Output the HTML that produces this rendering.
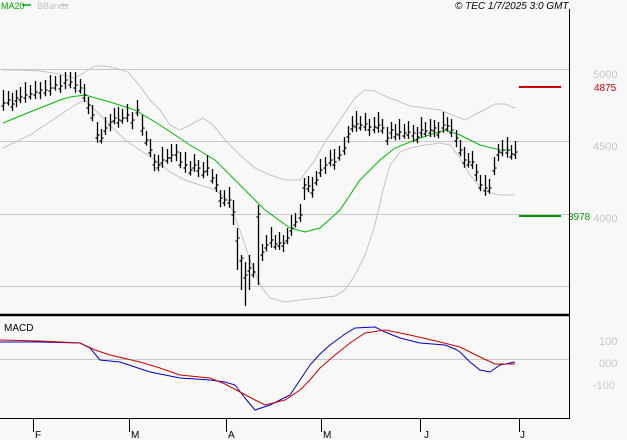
<!DOCTYPE html><html><head><style>html,body{margin:0;padding:0;background:#f8f8f8}svg{display:block}text{font-family:"Liberation Sans",sans-serif}</style></head><body>
<svg id="s" width="627" height="440" xmlns="http://www.w3.org/2000/svg">
<rect width="627" height="440" fill="#f8f8f8"/>
<g stroke="#c8c8c8" stroke-width="1">
<line x1="0" y1="69.5" x2="569" y2="69.5"/><line x1="0" y1="141.5" x2="569" y2="141.5"/><line x1="0" y1="214.5" x2="569" y2="214.5"/><line x1="0" y1="286.5" x2="569" y2="286.5"/><line x1="0" y1="359.5" x2="569" y2="359.5"/>
</g>
<g fill="none" stroke="#c4c4c4" stroke-width="1">
<polyline points="3,70 20,70 40,71 60,74 75,78 85,72 95,66 105,66 115,68 128,72 140,86 150,100 160,110 170,125 180,130 190,125 203,118 213,125 225,140 240,155 255,168 270,175 285,180 300,180 315,160 325,142 340,120 355,98 365,90 375,91 385,96 395,100 410,106 425,108 440,110 455,116 465,120 480,112 495,104 505,104 515,108"/>
<polyline points="3,148 30,135 60,115 75,105 85,100 95,110 110,125 125,140 140,150 155,160 170,172 185,180 200,185 215,190 228,200 240,230 250,260 260,285 270,298 285,302 300,300 320,298 335,296 345,290 355,275 365,255 375,225 383,190 390,165 400,152 410,148 425,145 440,143 450,145 460,158 470,175 480,187 490,193 500,195 515,195"/>
</g>
<polyline fill="none" stroke="#00bb00" points="3,123 30,112 60,100 70,97 85,95 110,102 135,110 160,125 190,145 215,160 240,185 265,210 290,228 305,232 320,228 340,210 360,180 380,160 395,148 420,138 445,130 460,135 480,145 500,150 512,150"/>
<g id="bars" stroke="#000" stroke-width="1.3" fill="none"></g>
<line x1="519" y1="87" x2="561" y2="87" stroke="#cc0000" stroke-width="2"/>
<line x1="519" y1="216" x2="561" y2="216" stroke="#009900" stroke-width="2"/>
<text x="594" y="91" font-size="10" fill="#cc0000">4875</text>
<text x="568" y="220" font-size="10" fill="#009900">3978</text>
<g font-size="11" fill="#c8c8c8"><text x="593" y="78">5000</text><text x="593" y="150">4500</text><text x="593" y="222">4000</text>
<text x="599" y="345">100</text><text x="599" y="367">000</text><text x="593" y="389">-100</text></g>
<polyline fill="none" stroke="#0000cc" points="0,342 40,342 80,343 90,348 100,360 120,362 135,367 150,372 180,378 210,380 225,382 235,385 245,398 255,410 270,405 280,400 290,395 300,380 310,365 320,354 330,345 345,334 355,328 375,327 385,332 400,338 420,343 445,345 455,349 460,352 470,362 480,370 490,372 500,365 515,362"/>
<polyline fill="none" stroke="#cc0000" points="0,340 40,341 80,343 95,350 110,355 140,362 160,368 180,375 210,378 225,384 240,392 255,400 265,405 285,400 300,390 310,380 320,368 335,355 350,343 365,333 385,330 410,335 440,342 460,347 480,357 495,364 515,364"/>
<line x1="569.5" y1="9" x2="569.5" y2="419" stroke="#000"/>
<line x1="0" y1="315" x2="570" y2="315" stroke="#000" stroke-width="2.5"/>
<line x1="0" y1="418.5" x2="570" y2="418.5" stroke="#000"/>
<g stroke="#000"><line x1="33.5" y1="418" x2="33.5" y2="432"/><line x1="129.5" y1="418" x2="129.5" y2="432"/><line x1="226.5" y1="418" x2="226.5" y2="432"/><line x1="321.5" y1="418" x2="321.5" y2="432"/><line x1="420.5" y1="418" x2="420.5" y2="432"/><line x1="519.5" y1="418" x2="519.5" y2="432"/></g>
<g font-size="10" fill="#000"><text x="35" y="438">F</text><text x="131" y="438">M</text><text x="228" y="438">A</text><text x="323" y="438">M</text><text x="424" y="438">J</text><text x="520" y="438">J</text></g>
<text x="1" y="9" font-size="9" fill="#00aa00">MA20</text><line x1="22" y1="5" x2="31" y2="5" stroke="#00aa00" stroke-width="1.5"/>
<text x="37" y="9" font-size="9" fill="#c4c4c4">BBands</text><line x1="60" y1="5" x2="68" y2="5" stroke="#c4c4c4" stroke-width="1.5"/>
<text x="455" y="9" font-size="10" font-style="italic" fill="#000">© TEC 1/7/2025 3:0 GMT</text>
<text x="4" y="331" font-size="10" fill="#000">MACD</text>
</svg>
<script>
var c=[[3,103],[8,100],[12,104],[16,98],[20,97],[25,95],[30,94],[35,92],[40,90],[45,90],[50,88],[55,85],[60,86],[65,80],[70,82],[75,85],[80,88],[84,95],[88,105],[92,115],[97,135],[101,138],[105,128],[110,122],[114,118],[118,120],[122,118],[127,115],[132,120],[137,110],[142,128],[146,140],[150,150],[154,162],[158,165],[162,160],[167,158],[171,155],[176,152],[180,162],[185,165],[190,170],[194,165],[198,168],[203,172],[207,168],[212,178],[216,185],[220,198],[224,200],[229,200],[233,212],[237,238],[241,258],[245,275],[249,268],[253,272],[258,214],[262,252],[266,245],[271,240],[275,244],[279,243],[283,243],[287,238],[291,228],[295,222],[300,215],[304,185],[308,186],[312,190],[316,180],[320,170],[325,165],[330,160],[334,162],[339,155],[344,148],[348,134],[352,126],[356,124],[360,125],[365,124],[369,127],[374,127],[378,125],[382,128],[387,138],[391,130],[395,134],[399,132],[404,133],[408,132],[413,133],[417,137],[421,130],[425,131],[430,130],[434,128],[438,132],[443,125],[447,126],[451,130],[456,138],[460,150],[464,160],[468,162],[472,162],[476,172],[480,185],[485,188],[489,188],[494,168],[498,152],[502,150],[507,150],[511,154],[515,152]];
var ov={237:[228,270],241:[255,290],245:[262,306],249:[255,290],258:[205,285],233:[200,225],304:[178,200]};
var d="",h=[13,9,11,8,10];
c.forEach(function(p,i){var x=p[0]+.5,y=p[1],hi=y-h[i%5],lo=y+h[(i+2)%5]*.7;if(ov[p[0]]){hi=ov[p[0]][0];lo=ov[p[0]][1];}d+="M"+x+","+hi+"V"+lo+"M"+(x-2)+","+(y+3)+"H"+x+"M"+x+","+y+"H"+(x+2);});
var e=document.createElementNS("http://www.w3.org/2000/svg","path");e.setAttribute("d",d);document.getElementById("bars").appendChild(e);
</script>
</body></html>
